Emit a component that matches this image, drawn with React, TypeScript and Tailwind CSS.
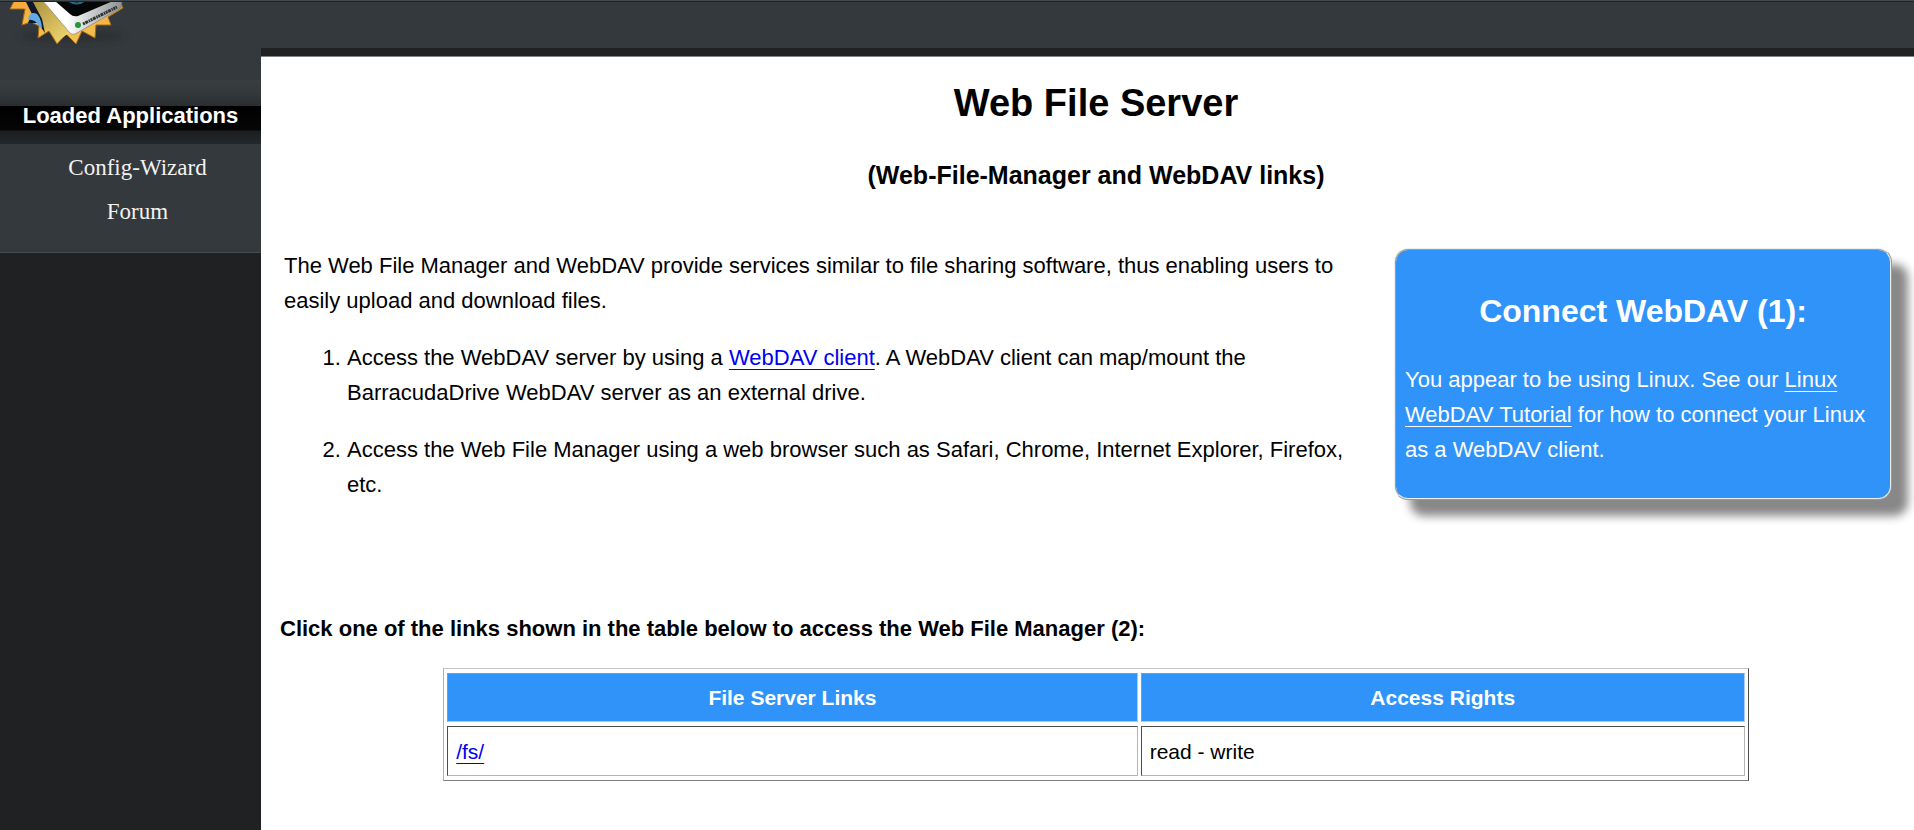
import type { ReactNode } from "react";

function Logo() {
  return (
    <svg className="block h-12 w-36" viewBox="0 0 144 48" role="img" aria-label="BarracudaDrive">
      <defs>
        <linearGradient id="gold" x1="0" y1="0" x2="0" y2="1">
          <stop offset="0" stopColor="#f6a93c" />
          <stop offset="1" stopColor="#efc552" />
        </linearGradient>
        <linearGradient id="sheet" x1="0" y1="0" x2="1" y2="1">
          <stop offset="0" stopColor="#a48c3c" />
          <stop offset="1" stopColor="#f7dc74" />
        </linearGradient>
        <linearGradient id="drive" x1="0" y1="0" x2="1" y2="0">
          <stop offset="0.3" stopColor="#ffffff" />
          <stop offset="1" stopColor="#8d9092" />
        </linearGradient>
        <filter id="soft" x="-20%" y="-50%" width="140%" height="200%">
          <feGaussianBlur stdDeviation="3" />
        </filter>
        <clipPath id="below-line"><rect x="0" y="2" width="144" height="46" /></clipPath>
      </defs>
      <g clipPath="url(#below-line)">
        <ellipse cx="72" cy="36" rx="52" ry="6" fill="#25292c" opacity="0.6" filter="url(#soft)" />
        <path
          d="M14 1 L10 9 L25 9 L22 25 L31 22 L39 26 L38 38 L49 31 L57 44 L66 34 L76 44 L82 31 L95 38 L96 25 L111 25 L108 17 L123 8 L120 1Z"
          fill="url(#gold)"
          stroke="#a66818"
          strokeWidth="1"
        />
        <path d="M26 1 H42 L72 33 L66 35 L57 42 L50 30 L43 29Z" fill="url(#sheet)" />
        <path d="M26 2 H33 L42 19 L45 33 L38 23 L28 23 L32 14Z" fill="#10162b" />
        <path d="M28 20 C29 13 33 12 37 14 C41 18 42 25 42 30 C38 23 34 19 28 20Z" fill="#62aae4" />
        <path d="M43 1 H122 L121 8 L75 34 Q72 35 70 33Z" fill="url(#drive)" stroke="#777a7c" strokeWidth="0.6" />
        <path d="M55 1 H113 L78 16 Q73 17 70 14Z" fill="#050607" />
        <path d="M69 1 Q77 6 84 1" fill="none" stroke="#216b91" strokeWidth="2" />
        <circle cx="78" cy="25" r="3" fill="#239638" />
        <path d="M83 24 L117 7" stroke="#303335" strokeWidth="3" strokeDasharray="2 0.6 3 0.8 1.5 0.6" />
      </g>
    </svg>
  );
}

function TextLink({ children }: { children: ReactNode }) {
  return (
    <a href="#" className="text-[#0000ee] underline decoration-1 underline-offset-4">
      {children}
    </a>
  );
}

const apps = ["Config-Wizard", "Forum"];
const rows = [{ path: "/fs/", rights: "read - write" }];

const topEdge = "shadow-[inset_0_1px_#42494d,inset_0_2px_#202427]";
const headCell =
  "h-[49px] border border-t-[#8f979f] border-l-[#8f979f] border-r-[#a9cdf3] border-b-[#a9cdf3] bg-[#2f93fa] font-bold text-white";
const bodyCell =
  "h-[50px] border border-t-[#4d4d4d] border-l-[#4d4d4d] border-r-[#b5b5b5] border-b-[#b5b5b5] px-2";

export default function App() {
  return (
    <div className="flex min-h-screen bg-[#202123] font-['Liberation_Sans',Arial,sans-serif] text-[22px] leading-[35px] text-black">
      <aside className="w-[261px] shrink-0">
        <div className="border-b border-[#454c50] bg-[#34393d]">
          <div className={`h-20 ${topEdge}`}>
            <Logo />
          </div>
          <h2 className="flex h-16 items-center justify-center bg-[linear-gradient(to_bottom,#393e42_0px,#34393c_12px,#292d2f_26px,#000_26px,#060606_50px,#1b1e20_51px,#24282c_64px)] pt-[6px] font-bold text-white">
            Loaded Applications
          </h2>
          <nav className="flex flex-col items-center pt-[2px] pb-[18px] pl-[14px] font-['Palatino_Linotype',Palatino,'Liberation_Serif',serif] text-[23px] leading-[44px] text-[#f2f2f2]">
            {apps.map((app) => (
              <a key={app} href="#">
                {app}
              </a>
            ))}
          </nav>
        </div>
      </aside>

      <div className="flex min-w-0 flex-1 flex-col">
        <header className={`h-14 border-b-8 border-[#202123] bg-[#34393d] ${topEdge}`} />
        <main className="flex-1 border-t border-[#808285] bg-white pr-[2px] pl-[19px]">
          <h1 className="pt-5 text-center text-[38px] leading-[52px] font-bold">Web File Server</h1>
          <h3 className="pt-7 text-center text-[25px] leading-[36px] font-bold">
            (Web-File-Manager and WebDAV links)
          </h3>

          <div className="mt-[55px] flex items-start">
            <section className="flex-1 pr-9 pl-1">
              <p>
                The Web File Manager and WebDAV provide services similar to file sharing software, thus enabling users to
                easily upload and download files.
              </p>
              <ol className="mt-[22px] list-decimal space-y-[22px] pl-[63px]">
                <li>
                  Access the WebDAV server by using a <TextLink>WebDAV client</TextLink>. A WebDAV client can map/mount
                  the BarracudaDrive WebDAV server as an external drive.
                </li>
                <li>
                  Access the Web File Manager using a web browser such as Safari, Chrome, Internet Explorer, Firefox,
                  etc.
                </li>
              </ol>
            </section>
            <aside className="mr-5 h-[252px] w-[498px] rounded-[14px] border-2 border-[#eee] bg-[#2f93fa] px-[9px] pt-[37px] text-white shadow-[16px_16px_10px_#888] [border-style:ridge]">
              <h2 className="mb-[27px] text-center text-[32px] leading-[48px] font-bold">Connect WebDAV (1):</h2>
              <p>
                You appear to be using Linux. See our{" "}
                <a href="#" className="underline decoration-1 underline-offset-4">
                  Linux WebDAV Tutorial
                </a>{" "}
                for how to connect your Linux as a WebDAV client.
              </p>
            </aside>
          </div>

          <h4 className="mt-[109px] font-bold">
            Click one of the links shown in the table below to access the Web File Manager (2):
          </h4>
          <table className="mx-auto mt-[22px] w-4/5 table-fixed border-separate border-spacing-x-[3px] border-spacing-y-[4px] border border-t-[#c4c4c4] border-l-[#b0b0b0] border-r-[#4d4d4d] border-b-[#808080] text-[21px]">
            <thead>
              <tr>
                <th className={`${headCell} w-8/15`}>File Server Links</th>
                <th className={headCell}>Access Rights</th>
              </tr>
            </thead>
            <tbody>
              {rows.map((row) => (
                <tr key={row.path}>
                  <td className={bodyCell}>
                    <TextLink>{row.path}</TextLink>
                  </td>
                  <td className={bodyCell}>{row.rights}</td>
                </tr>
              ))}
            </tbody>
          </table>
        </main>
      </div>
    </div>
  );
}
